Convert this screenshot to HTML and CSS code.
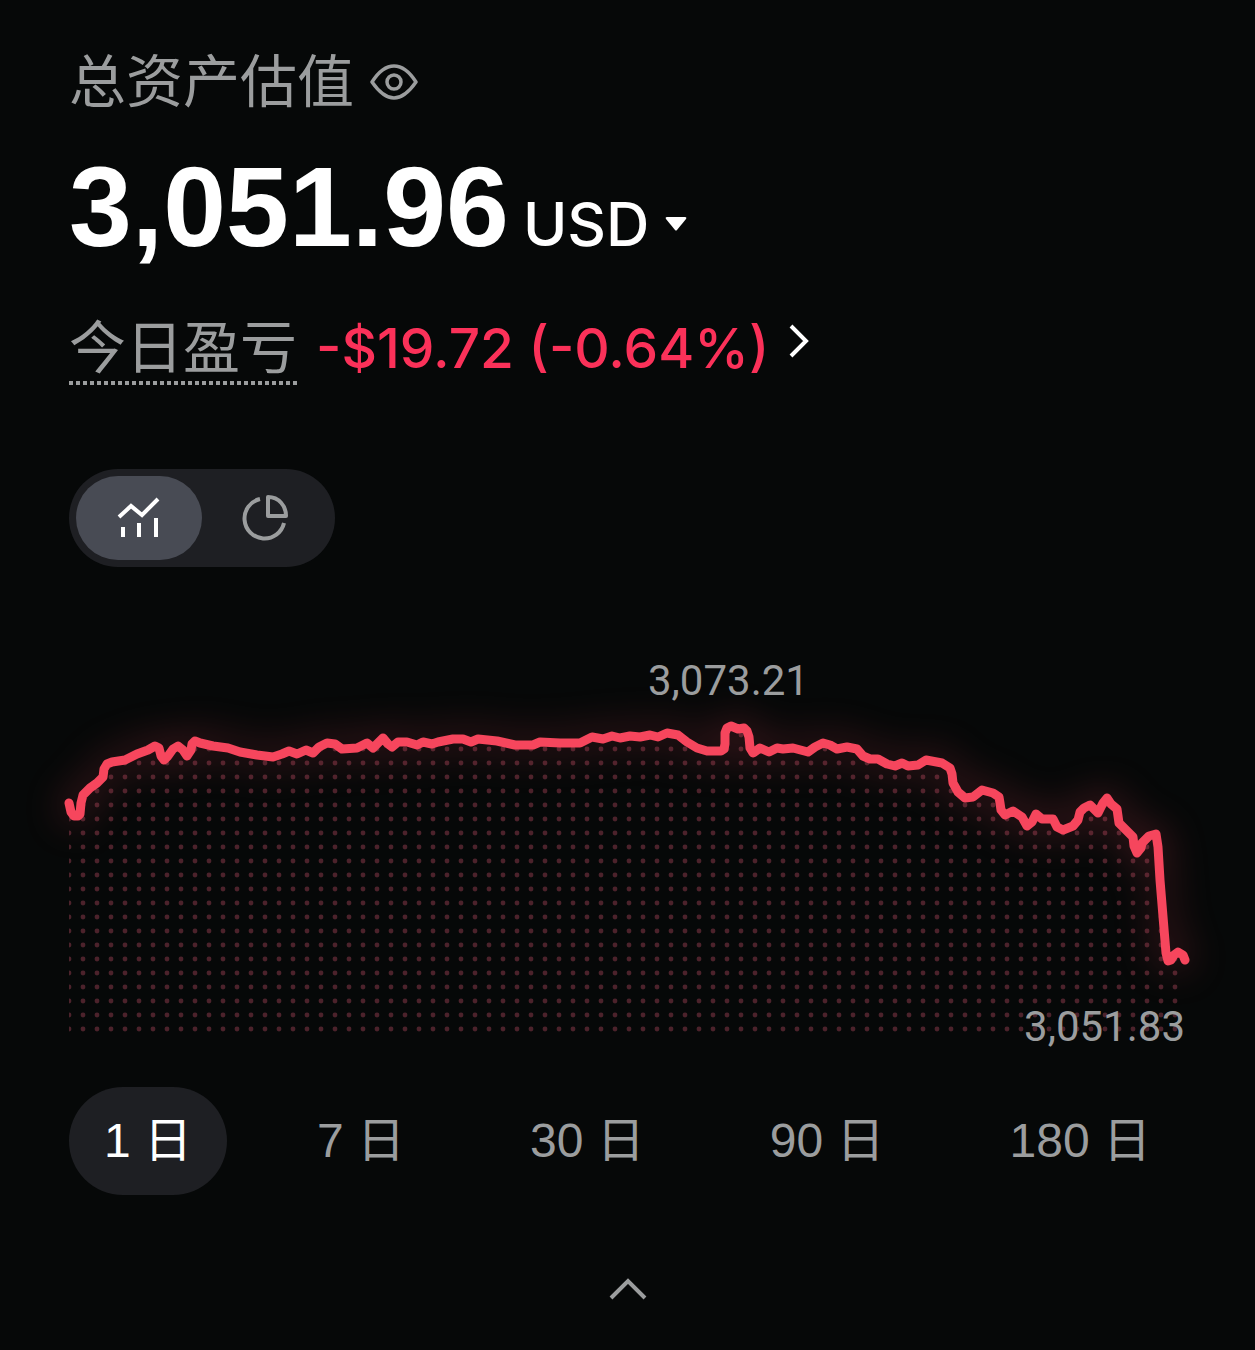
FILE: index.html
```html
<!DOCTYPE html>
<html lang="zh-CN">
<head>
    <meta charset="UTF-8">
    <meta name="viewport" content="width=device-width, initial-scale=1.0">
    <title>总资产估值</title>
    <link rel="stylesheet" href="styles.css">
</head>
<body>
    <main class="assets">
        <div class="title-row">
            <h1>总资产估值</h1>
            <button class="icon-btn" type="button" aria-label="隐藏金额">
                <svg width="48" height="38" viewBox="0 0 48 38" fill="none" stroke="currentColor" stroke-width="3.5">
                    <path d="M2 19C9 8 16 3 24 3s15 5 22 16c-7 10-14 16-22 16S9 29 2 19z" stroke-linejoin="round"/>
                    <circle cx="24" cy="19" r="7"/>
                </svg>
            </button>
        </div>

        <div class="balance">
            <span class="amount">3,051.96</span>
            <button class="currency" type="button">
                USD
                <svg width="22" height="14" viewBox="0 0 22 14" fill="currentColor">
                    <path d="M2 0h18q2 0 1 2l-9 11q-1 1-2 0L1 2Q0 0 2 0z"/>
                </svg>
            </button>
        </div>

        <a class="pnl" href="#pnl">
            <span class="pnl-label">今日盈亏</span>
            <span class="pnl-value">-$19.72 (-0.64%)</span>
            <svg class="pnl-arrow" width="22" height="34" viewBox="0 0 22 34" fill="none" stroke="currentColor" stroke-width="4">
                <path d="M3 2l15 15L3 32"/>
            </svg>
        </a>

        <div class="toggle">
            <button class="toggle-btn active" type="button" aria-label="走势">
                <svg width="44" height="44" viewBox="0 0 44 44" fill="none" stroke="currentColor" stroke-width="4">
                    <path d="M2 21l12-11 11 9L41 3"/>
                    <path d="M6 31v10M22 27v14M39 22v19"/>
                </svg>
            </button>
            <button class="toggle-btn" type="button" aria-label="分布">
                <svg width="48" height="48" viewBox="0 0 48 48" fill="none" stroke="currentColor" stroke-width="4">
                    <path d="M19 5A20 20 0 1 0 43 29"/>
                    <path d="M27 3v19h18C45 12 38 3 27 3z" stroke-linejoin="round"/>
                </svg>
            </button>
        </div>

        <svg class="chart" viewBox="69 650 1117 400" role="img" aria-label="资产走势">
            <defs>
                <pattern id="dots" x="62" y="700" width="14" height="14" patternUnits="userSpaceOnUse">
                    <circle cx="7" cy="7" r="2.4"/>
                </pattern>
            </defs>
            <path fill="url(#dots)" d="M69 802L76 817 81 803 90 788 103 777 110 762 155 746 164 760 178 746 187 756 194 741 273 757 327 743 342 749 398 742 453 739 580 743 667 733 687 742 697 748 722 752 725 733 746 729 753 753 808 752 823 743 857 749 870 759 895 766 942 763 951 769 958 792 965 798 982 790 999 797 1005 815 1027 826 1036 814 1063 830 1080 812 1107 798 1117 809 1119 823 1133 837 1137 852 1156 834 1166 953 1178 956 1185 960V1033H69z"/>
            <polyline class="line" points="69,803 71,812 74,816 78,816 80,814 81,803 83,795 90,788 97,783 103,777 104,769 107,764 112,762 125,760 137,754 148,750 155,746 159,748 161,756 164,760 168,756 173,749 178,746 183,750 187,756 191,750 192,744 195,741 200,743 213,746 228,748 240,752 257,755 273,757 282,754 289,751 297,754 306,750 313,753 319,747 327,743 335,744 342,749 357,748 367,743 373,748 378,743 383,738 388,744 392,747 398,742 407,742 417,745 423,742 432,744 438,742 453,739 463,739 471,742 478,739 497,741 515,745 533,745 540,742 560,743 580,743 592,737 603,739 612,736 620,738 630,736 640,737 650,735 658,737 667,733 678,735 687,742 697,748 707,751 721,751 724,749 725,744 725,733 727,728 731,726 738,729 744,728 747,731 749,737 750,748 753,753 760,748 769,752 777,748 783,749 793,748 808,752 815,747 823,743 830,745 837,749 847,747 857,749 863,756 870,759 878,759 887,764 895,766 902,763 908,766 918,765 926,760 942,763 950,768 952,774 953,783 958,792 965,798 973,797 982,790 993,793 999,797 1000,803 1001,810 1005,815 1013,811 1022,817 1027,826 1032,822 1036,814 1042,819 1053,819 1057,827 1063,830 1073,826 1078,820 1080,812 1084,808 1090,805 1098,813 1103,803 1107,798 1111,804 1117,809 1118,816 1119,823 1127,831 1133,837 1134,846 1137,853 1141,848 1142,843 1149,836 1156,834 1158,847 1160,880 1166,953 1168,961 1171,960 1174,955 1178,952 1183,955 1185,960"/>
            <text class="chart-label" x="648" y="695">3,073.21</text>
            <text class="chart-label" x="1185" y="1041" text-anchor="end">3,051.83</text>
        </svg>

        <nav class="ranges">
            <button class="range active" type="button">1 日</button>
            <button class="range" type="button">7 日</button>
            <button class="range" type="button">30 日</button>
            <button class="range" type="button">90 日</button>
            <button class="range" type="button">180 日</button>
        </nav>

        <button class="icon-btn collapse" type="button" aria-label="收起">
            <svg width="38" height="22" viewBox="0 0 38 22" fill="none" stroke="currentColor" stroke-width="4">
                <path d="M2 20L19 3l17 17"/>
            </svg>
        </button>
    </main>
</body>
</html>
```

FILE: styles.css
```css
* {
    box-sizing: border-box;
    margin: 0;
    padding: 0;
}

body {
    font-family: "Liberation Sans", "Noto Sans CJK SC", sans-serif;
    background: #060808;
    color: #fff;
}

button {
    font: inherit;
    color: inherit;
    background: none;
    border: none;
    cursor: pointer;
}

svg {
    display: block;
}

.assets {
    display: flex;
    flex-direction: column;
    align-items: flex-start;
    padding: 52px 69px;
}

.title-row {
    display: flex;
    align-items: center;
    gap: 16px;
    color: #9b9d9e;
}

h1 {
    font-size: 57px;
    font-weight: 400;
    line-height: 60px;
}

.icon-btn {
    color: #9b9d9e;
}

.balance {
    display: flex;
    align-items: baseline;
    gap: 14px;
    margin-top: 39px;
}

.amount {
    font-size: 113px;
    font-weight: 700;
    line-height: 112px;
}

.currency {
    display: flex;
    align-items: center;
    gap: 16px;
    font-family: Inter, sans-serif;
    font-size: 60px;
    font-weight: 500;
    line-height: 60px;
}

.pnl {
    display: flex;
    align-items: baseline;
    gap: 19px;
    margin-top: 55px;
    font-size: 57px;
    line-height: 60px;
    color: #fff;
    text-decoration: none;
}

.pnl-label {
    padding-bottom: 7px;
    color: #9b9d9e;
    background: repeating-linear-gradient(90deg, #9b9d9e 0 4px, transparent 4px 7px) bottom / 100% 4px no-repeat;
}

.pnl-value {
    font-family: Inter, sans-serif;
    font-size: 55px;
    font-weight: 500;
    color: #fb3159;
}

.pnl-arrow {
    align-self: flex-start;
    margin-top: 6px;
}

.toggle {
    display: flex;
    margin-top: 84px;
    padding: 7px;
    border-radius: 49px;
    background: #1e1f23;
}

.toggle-btn {
    display: flex;
    align-items: center;
    justify-content: center;
    width: 126px;
    height: 84px;
    border-radius: 42px;
    color: #9b9d9e;
}

.toggle-btn.active {
    background: #484b54;
    color: #fff;
}

.chart {
    width: 100%;
    margin-top: 83px;
    overflow: visible;
}

#dots circle {
    fill: #4c222b;
}

.line {
    fill: none;
    stroke: #f6465d;
    stroke-width: 9px;
    stroke-linecap: round;
    stroke-linejoin: round;
    filter: drop-shadow(0 0 20px rgba(246, 70, 93, 0.45));
}

.chart-label {
    font-family: Roboto, sans-serif;
    font-size: 42px;
    fill: #9b9d9e;
}

.ranges {
    display: flex;
    justify-content: space-between;
    width: 100%;
    margin-top: 37px;
}

.range {
    height: 108px;
    padding: 0 35px 10px;
    border-radius: 54px;
    font-size: 48px;
    color: #9b9d9e;
}

.range.active {
    background: #1e1f23;
    color: #fff;
}

.collapse {
    align-self: center;
    margin-top: 83px;
}
```
